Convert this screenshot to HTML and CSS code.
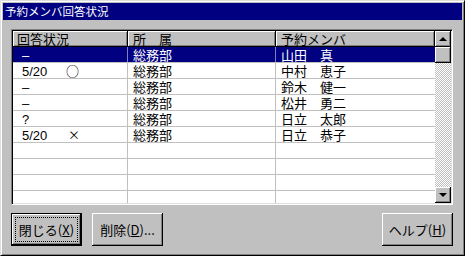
FILE: index.html
```html
<!DOCTYPE html>
<html lang="ja">
<head>
  <meta charset="UTF-8">
  <title>予約メンバ回答状況</title>
  <link rel="stylesheet" href="styles.css">
</head>
<body>
  <div class="window">
    <div class="titlebar">予約メンバ回答状況</div>

    <div class="content">
      <div class="listbox">
        <div class="grid">
          <div class="row head">
            <div class="cell c1">回答状況</div>
            <div class="cell c2">所　属</div>
            <div class="cell c3">予約メンバ</div>
          </div>
          <div class="row selected">
            <div class="cell c1"><span class="date">–</span></div>
            <div class="cell c2">総務部</div>
            <div class="cell c3">山田　真</div>
          </div>
          <div class="row">
            <div class="cell c1"><span class="date">5/20</span><span class="mark">○</span></div>
            <div class="cell c2">総務部</div>
            <div class="cell c3">中村　恵子</div>
          </div>
          <div class="row">
            <div class="cell c1"><span class="date">–</span></div>
            <div class="cell c2">総務部</div>
            <div class="cell c3">鈴木　健一</div>
          </div>
          <div class="row">
            <div class="cell c1"><span class="date">–</span></div>
            <div class="cell c2">総務部</div>
            <div class="cell c3">松井　勇二</div>
          </div>
          <div class="row">
            <div class="cell c1"><span class="date">?</span></div>
            <div class="cell c2">総務部</div>
            <div class="cell c3">日立　太郎</div>
          </div>
          <div class="row">
            <div class="cell c1"><span class="date">5/20</span><span class="mark cross">×</span></div>
            <div class="cell c2">総務部</div>
            <div class="cell c3">日立　恭子</div>
          </div>
          <div class="row"><div class="cell c1"></div><div class="cell c2"></div><div class="cell c3"></div></div>
          <div class="row"><div class="cell c1"></div><div class="cell c2"></div><div class="cell c3"></div></div>
          <div class="row"><div class="cell c1"></div><div class="cell c2"></div><div class="cell c3"></div></div>
          <div class="row last"><div class="cell c1"></div><div class="cell c2"></div><div class="cell c3"></div></div>
        </div>

        <div class="scrollbar">
          <div class="sbtn"><span class="arrow up"></span></div>
          <div class="thumb"></div>
          <div class="track"></div>
          <div class="sbtn"><span class="arrow down"></span></div>
        </div>
      </div>

      <div class="buttons">
        <button class="btn default"><span class="focus">閉じる(<u>X</u>)</span></button>
        <button class="btn">削除(<u>D</u>)...</button>
        <button class="btn help">ヘルプ(<u>H</u>)</button>
      </div>
    </div>
  </div>
</body>
</html>
```

FILE: styles.css
```css
*{
  margin: 0;
  padding: 0;
  box-sizing: border-box;
}
body {
  width: 465px;
  height: 256px;
  background: #c0c0c0;
  font-family: "Noto Sans CJK JP", "Liberation Sans", sans-serif;
  font-size: 12px;
  color: #000;
  overflow: hidden;
}
.window {
  width: 465px;
  height: 256px;
  padding: 2px;
  background: #c0c0c0;
  border-top: 1px solid #dfdfdf;
  border-left: 1px solid #dfdfdf;
  border-right: 1px solid #000;
  border-bottom: 1px solid #000;
  box-shadow: inset 1px 1px #fff, inset -1px -1px #808080;
}
.titlebar {
  height: 17px;
  background: #000080;
  color: #fff;
  padding-left: 2px;
  font-size: 11.5px;
  line-height: 17px;
}
.content {
  padding: 9px 9px 0 8px;
}

/* リスト */
.listbox {
  display: flex;
  height: 176px;
  border-top: 1px solid #808080;
  border-left: 1px solid #808080;
  border-right: 1px solid #fff;
  border-bottom: 1px solid #fff;
  box-shadow: inset 1px 1px #000, inset -1px -1px #dfdfdf;
  padding: 1px;
  background: #fff;
}
.grid {
  flex: 1;
}
.row {
  display: flex;
  height: 16px;
  border-bottom: 1px solid #c0c0c0;
  font-size: 13px;
  line-height: 15px;
}
.row.last {
  height: 12px;
  border-bottom: 0;
}
.cell {
  white-space: nowrap;
  border-right: 1px solid #c0c0c0;
}
.c1 { width: 115px; padding-left: 7px; }
.c2 { width: 148px; padding-left: 5px; }
.c3 { flex: 1; padding-left: 5px; border-right: 0; }

.head {
  border-bottom: 0;
  background: #c0c0c0;
}
.head .cell {
  border-right: 1px solid #000;
  box-shadow: inset 1px 1px #fff, inset -1px -1px #808080;
  border-bottom: 1px solid #000;
}
.head .c1 { padding-left: 4px; }
.head .c3 { border-right: 1px solid #000; }

.selected {
  background: #000080;
  color: #fff;
}
.selected .cell { border-right-color: #8080c0; }
.selected .c3 { border-right: 0; }

.date {
  display: inline-block;
  width: 46px;
  padding-left: 2px;
  font-family: "Liberation Sans", sans-serif;
}
.mark {
  font-size: 13px;
}
.cross { padding-left: 2px; font-size: 12px; }

/* スクロールバー */
.scrollbar {
  width: 16px;
  display: flex;
  flex-direction: column;
}
.sbtn, .thumb {
  height: 16px;
  background: #c0c0c0;
  border-right: 1px solid #000;
  border-bottom: 1px solid #000;
  box-shadow: inset 1px 1px #fff, inset -1px -1px #808080;
  display: flex;
  align-items: center;
  justify-content: center;
}
.track {
  flex: 1;
  background: repeating-conic-gradient(#c0c0c0 0 25%, #fff 0 50%) 0 0 / 2px 2px;
}
.arrow {
  width: 0;
  height: 0;
  border-left: 4px solid transparent;
  border-right: 4px solid transparent;
}
.up { border-bottom: 4px solid #000; }
.down { border-top: 4px solid #000; }

/* ボタン */
.buttons {
  display: flex;
  gap: 10px;
  margin-top: 8px;
}
.btn {
  width: 71px;
  height: 33px;
  background: #c0c0c0;
  font-family: "Noto Sans CJK JP", "Liberation Sans", sans-serif;
  font-size: 13px;
  color: #000;
  border: 0;
  box-shadow: inset -1px -1px #000, inset 1px 1px #fff, inset -2px -2px #808080;
  display: flex;
  align-items: center;
  justify-content: center;
}
.btn u { text-decoration: underline; }
.default {
  border: 1px solid #000;
  padding: 3px;
}
.focus {
  flex: 1;
  align-self: stretch;
  border: 1px dotted #000;
  display: flex;
  align-items: center;
  justify-content: center;
}
.help {
  margin-left: auto;
}
```
